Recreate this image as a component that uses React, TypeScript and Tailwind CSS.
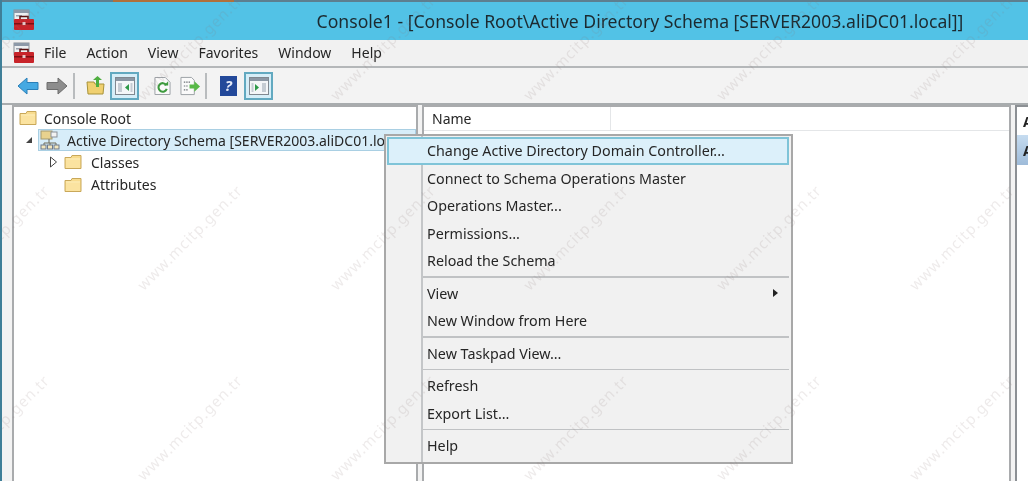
import type { ReactNode } from "react";

const FONT = "font-['Noto_Sans','Open_Sans',sans-serif]";

function Toolbox({ className = "" }: { className?: string }) {
  return (
    <svg viewBox="0 0 22 22" className={className}>
      <rect x="1" y="1" width="15" height="12" fill="#eef0f2" stroke="#8a8f96" />
      <rect x="1" y="1" width="15" height="3" fill="#8d99a8" />
      <rect x="3" y="6" width="6" height="1.5" fill="#9aa2ac" />
      <path d="M7 10V7.5h8V10" fill="none" stroke="#5a1010" strokeWidth="1.5" />
      <rect x="1" y="10" width="20" height="11" rx="1" fill="#c8242a" />
      <rect x="1" y="14" width="20" height="1.5" fill="#7d1014" />
      <rect x="9.5" y="13" width="3" height="3" fill="#e8c8c8" />
    </svg>
  );
}

function Folder({ className = "" }: { className?: string }) {
  return (
    <svg viewBox="0 0 18 16" className={className}>
      <path d="M1 3.5V14.5H17V1.5H8L7 3.5Z" fill="#f8dc8e" stroke="#c9a85a" />
      <path d="M2 5H16" stroke="#fff3c8" />
      <rect x="2" y="6" width="14" height="8" fill="#fbe3a0" />
    </svg>
  );
}

function NavArrow({ back }: { back?: boolean }) {
  return (
    <svg viewBox="0 0 22 18" className="h-[18px] w-[22px]">
      {back ? (
        <path d="M1 9 10 1V5.5H21V12.5H10V17Z" fill="#45a9e2" stroke="#2a7fb8" />
      ) : (
        <path d="M21 9 12 1V5.5H1V12.5H12V17Z" fill="#8d8d8d" stroke="#6d6d6d" />
      )}
    </svg>
  );
}

function PaneToggle({ flip }: { flip?: boolean }) {
  return (
    <div className="flex h-[28px] w-[29px] items-center justify-center border-2 border-[#62a9c0] bg-[#d6eef8]">
      <svg viewBox="0 0 20 18" className="h-[18px] w-[20px]">
        <rect x="0.5" y="0.5" width="19" height="17" fill="#f4f6f8" stroke="#808890" />
        <rect x="1" y="1" width="18" height="3" fill="#8b97a4" />
        {flip ? (
          <>
            <path d="M6 7 10 10.5 6 14Z" fill="#2f9a4a" />
            <rect x="13" y="6" width="4" height="9" fill="#c5ccd3" />
            <rect x="2.5" y="6" width="2" height="9" fill="#c5ccd3" />
          </>
        ) : (
          <>
            <path d="M14 7 10 10.5 14 14Z" fill="#2f9a4a" />
            <rect x="3" y="6" width="4" height="9" fill="#c5ccd3" />
            <rect x="15.5" y="6" width="2" height="9" fill="#c5ccd3" />
          </>
        )}
      </svg>
    </div>
  );
}

function Separator() {
  return <div className="h-[26px] w-[2px] bg-[#b9bcbe]" />;
}

function Toolbar() {
  return (
    <div className="flex h-[37px] shrink-0 items-center border-b-2 border-[#a8acae] bg-[#f3f3f3] pl-[15px]">
      <NavArrow back />
      <div className="w-[7px]" />
      <NavArrow />
      <div className="w-[5px]" />
      <Separator />
      <div className="w-[11px]" />
      <svg viewBox="0 0 20 20" className="h-[20px] w-[20px]">
        <path d="M1 6H8L9 8H18L17 18H2Z" fill="#f0d070" stroke="#a8933a" />
        <path d="M10 11V4H7L11.5 0 16 4H13V11Z" fill="#4fae3f" />
      </svg>
      <div className="w-[4px]" />
      <PaneToggle />
      <div className="w-[15px]" />
      <svg viewBox="0 0 18 20" className="h-[20px] w-[17px]">
        <path d="M1 1H12L17 6V19H1Z" fill="#fafafa" stroke="#9a9fa5" />
        <path d="M13 9A4.5 4.5 0 1 0 13.5 13" fill="none" stroke="#3d9a3d" strokeWidth="2.2" />
        <path d="M10.5 9.5H15V5Z" fill="#3d9a3d" />
      </svg>
      <div className="w-[9px]" />
      <svg viewBox="0 0 22 20" className="h-[20px] w-[21px]">
        <path d="M1 1H12L15 4V19H1Z" fill="#fafafa" stroke="#9a9fa5" />
        <path d="M4 6H11M4 10H9M4 14H9" stroke="#6b7076" strokeWidth="1.2" strokeDasharray="1.5 1" />
        <path d="M10 8.5H15V5L21 10.5 15 16V12.5H10Z" fill="#58b947" />
      </svg>
      <div className="w-[4px]" />
      <Separator />
      <div className="w-[13px]" />
      <div className="flex h-[20px] w-[17px] items-center justify-center bg-[#23499a] text-[15px] leading-none font-bold text-[#e4e9f7] italic">?</div>
      <div className="w-[7px]" />
      <PaneToggle flip />
    </div>
  );
}

function SchemaIcon() {
  return (
    <svg viewBox="0 0 20 20" className="h-[20px] w-[20px]">
      <rect x="1" y="1" width="11" height="8" fill="#e8d28e" stroke="#a39a70" />
      <rect x="11" y="2" width="6" height="5" fill="#f2f2f2" stroke="#8a8f96" />
      <path d="M9 9V13M4 13H16M4 13V15M16 13V15M10 13V15" stroke="#6f6a58" />
      <rect x="1" y="15" width="5" height="4" fill="#f3e6bc" stroke="#6f7a8a" />
      <rect x="7.5" y="15" width="5" height="4" fill="#f3e6bc" stroke="#6f7a8a" />
      <rect x="14" y="15" width="5" height="4" fill="#f3e6bc" stroke="#6f7a8a" />
    </svg>
  );
}

function TreePane() {
  return (
    <div className="h-full w-[406px] shrink-0 overflow-hidden border-2 border-b-0 border-[#a9abad] bg-white text-[14px] text-[#262626]">
      <div className="flex h-[22px] items-center pl-[5px]">
        <Folder className="h-[16px] w-[18px]" />
        <span className="ml-[7px]">Console Root</span>
      </div>
      <div className="flex h-[22px] items-center pl-[11px]">
        <svg viewBox="0 0 8 8" className="h-[8px] w-[8px]">
          <path d="M7 1V7H1Z" fill="#444" />
        </svg>
        <div className="ml-[5px] flex h-[22px] flex-1 items-center border border-[#a9cfe3] bg-[#d7edf9] pl-[1px]">
          <SchemaIcon />
          <span className="ml-[7px] whitespace-nowrap">Active Directory Schema [SERVER2003.aliDC01.local]</span>
        </div>
      </div>
      <div className="flex h-[22px] items-center pl-[35px]">
        <svg viewBox="0 0 9 12" className="h-[12px] w-[9px]">
          <path d="M1.5 1 7.5 6 1.5 11Z" fill="#fff" stroke="#444" />
        </svg>
        <Folder className="ml-[6px] h-[16px] w-[18px]" />
        <span className="ml-[9px]">Classes</span>
      </div>
      <div className="flex h-[23px] items-center pl-[50px]">
        <Folder className="h-[16px] w-[18px]" />
        <span className="ml-[9px]">Attributes</span>
      </div>
    </div>
  );
}

function ListPane() {
  return (
    <div className="h-full w-[589px] shrink-0 border-2 border-b-0 border-[#a9abad] bg-white">
      <div className="flex h-[24px] border-b border-[#e4e6e8]">
        <div className="flex w-[187px] items-center border-r border-[#e4e6e8] pl-[8px] text-[14px] text-[#262626]">Name</div>
      </div>
    </div>
  );
}

function ActionsPane() {
  return (
    <div className="h-full flex-1 overflow-hidden border-t-2 border-l-2 border-[#8c9094] bg-white">
      <div className="flex h-[28px] items-center pl-[6px] text-[14px] font-bold text-[#222]">A</div>
      <div className="flex h-[30px] items-center bg-gradient-to-b from-[#c6dcf0] to-[#9ebbd9] pl-[6px] text-[14px] font-bold text-[#222]">A</div>
    </div>
  );
}

function MenuRow({ children, active, arrow }: { children: ReactNode; active?: boolean; arrow?: boolean }) {
  return (
    <div className={active ? "flex h-[27.5px] items-center justify-between border-2 border-[#7fc4d8] bg-[#dcf0fa] pr-[9px] pl-[38px]" : "flex h-[27.5px] items-center justify-between pr-[11px] pl-[40px]"}>
      <span className="whitespace-nowrap">{children}</span>
      {arrow && (
        <svg viewBox="0 0 5 8" className="h-[8px] w-[5px]">
          <path d="M0 0 5 4 0 8Z" fill="#222" />
        </svg>
      )}
    </div>
  );
}

function MenuSep() {
  return (
    <div className="flex h-[5px] items-center pl-[36px]">
      <div className="h-[1.5px] w-full bg-[#c0c2c4]" />
    </div>
  );
}

function ContextMenu() {
  return (
    <div className="absolute top-[134px] left-[382px] w-[409px] border-2 border-[#a8a8a8] bg-[#f1f1f1] pt-[1px] pr-[2px] pb-[2px] pl-[1px] text-[14.3px] text-[#262626]">
      <div className="absolute top-0 bottom-0 left-[35px] w-[1.5px] bg-[#c4c6c8]" />
      <div className="relative">
        <MenuRow active>Change Active Directory Domain Controller...</MenuRow>
        <MenuRow>Connect to Schema Operations Master</MenuRow>
        <MenuRow>Operations Master...</MenuRow>
        <MenuRow>Permissions...</MenuRow>
        <MenuRow>Reload the Schema</MenuRow>
        <MenuSep />
        <MenuRow arrow>View</MenuRow>
        <MenuRow>New Window from Here</MenuRow>
        <MenuSep />
        <MenuRow>New Taskpad View...</MenuRow>
        <MenuSep />
        <MenuRow>Refresh</MenuRow>
        <MenuRow>Export List...</MenuRow>
        <MenuSep />
        <MenuRow>Help</MenuRow>
      </div>
    </div>
  );
}

function Watermarks() {
  return (
    <div className="pointer-events-none absolute -top-[48px] -left-[102px] grid grid-cols-[repeat(6,193px)] auto-rows-[190px]">
      {Array.from({ length: 18 }).map((_, i) => (
        <div key={i} className="flex items-center justify-center">
          <span className="-rotate-45 text-[15px] tracking-[1px] whitespace-nowrap text-[#8a7a7a]/15">www.mcitp.gen.tr</span>
        </div>
      ))}
    </div>
  );
}

export default function App() {
  return (
    <div className={`relative flex h-[481px] w-[1028px] flex-col overflow-hidden border-l-2 border-[#3f7f98] bg-[#f3f3f3] blur-[0.4px] ${FONT}`}>
      <div className="h-[2px] shrink-0 bg-[#5d7f90]" />
      <div className="absolute top-0 left-[111px] h-[2px] w-[121px] bg-[#b0703c]" />
      <div className="relative flex h-[38px] shrink-0 items-center justify-center bg-[#52c2e6] pl-[250px] text-[17.6px] text-[#1c2a30]">
        <Toolbox className="absolute top-[7px] left-[11px] h-[22px] w-[22px]" />
        <span className="whitespace-nowrap">Console1 - [Console Root\Active Directory Schema [SERVER2003.aliDC01.local]]</span>
      </div>
      <div className="flex h-[28px] shrink-0 items-center gap-[20px] border-b-2 border-[#b4b7b9] bg-[#f1f1f1] pb-[1px] pl-[11px] text-[14px] text-[#262626]">
        <Toolbox className="-mr-[11px] h-[22px] w-[22px]" />
        <span>File</span>
        <span>Action</span>
        <span>View</span>
        <span>Favorites</span>
        <span>Window</span>
        <span>Help</span>
      </div>
      <Toolbar />
      <div className="flex min-h-0 flex-1 gap-[4px] pl-[10px]">
        <TreePane />
        <ListPane />
        <ActionsPane />
      </div>
      <ContextMenu />
      <Watermarks />
    </div>
  );
}
